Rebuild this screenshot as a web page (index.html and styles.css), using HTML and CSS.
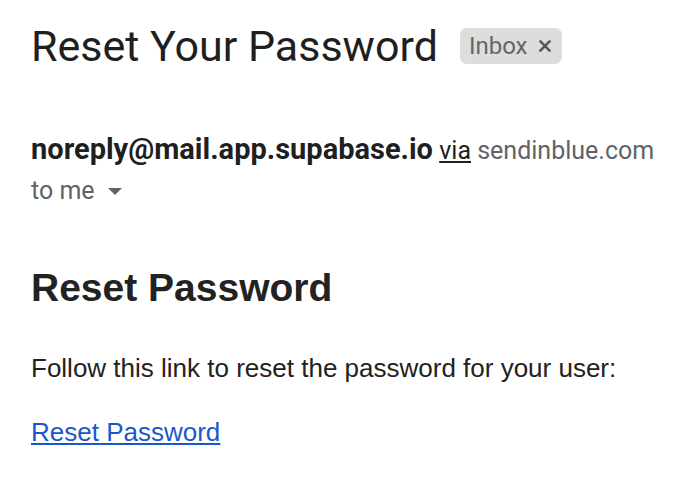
FILE: index.html
```html
<!DOCTYPE html>
<html>
<head>
<meta charset="utf-8">
<link rel="stylesheet" href="styles.css">
</head>
<body>
<div class="page">
  <div class="subject">
    <h1 class="title">Reset Your Password</h1>
    <span class="chip">Inbox <span class="chip-x">×</span></span>
  </div>
  <div class="sender">
    <div class="from"><span class="addr">noreply@mail.app.supabase.io</span> <span class="via">via</span> <span class="domain">sendinblue.com</span></div>
    <div class="to">to me <span class="caret"></span></div>
  </div>
  <div class="message">
    <h2 class="msg-title">Reset Password</h2>
    <p class="msg-text">Follow this link to reset the password for your user:</p>
    <p class="msg-link"><a href="#">Reset Password</a></p>
  </div>
</div>
</body>
</html>
```
FILE: styles.css
```css
html, body { margin: 0; padding: 0; background: #fff; }
.page { padding: 22px 31px; }
.subject { display: flex; align-items: center; gap: 22px; height: 48px; }
.title { margin: 0; font-family: Roboto, "Noto Sans", sans-serif; font-weight: 400; font-size: 43px; color: #1f1f1f; letter-spacing: 0; }
.chip { display: inline-flex; align-items: center; gap: 10px; background: #dddddd; color: #666; font-family: Roboto, sans-serif; font-size: 24px; height: 36px; padding: 0 10px 0 9px; border-radius: 7px; }
.chip-x { font-size: 28px; color: #555; line-height: 1; }
.sender { margin-top: 60px; font-family: Roboto, sans-serif; font-size: 25px; }
.from { line-height: 38px; color: #5f6368; }
.addr { font-weight: 700; font-size: 29px; color: #1f1f1f; }
.via { text-decoration: underline; color: #1f1f1f; }
.to { margin-top: 2px; line-height: 38px; color: #5f6368; display: flex; align-items: center; gap: 13px; }
.caret { width: 0; height: 0; border-left: 7px solid transparent; border-right: 7px solid transparent; border-top: 7px solid #5f6368; }
.message { margin-top: 55px; font-family: "Liberation Sans", Arial, sans-serif; color: #222; }
.msg-title { margin: 0; font-size: 39px; font-weight: 700; line-height: 46px; }
.msg-text { margin: 41px 0 0; font-size: 26px; line-height: 32px; }
.msg-link { margin: 32px 0 0; font-size: 26px; line-height: 32px; }
.msg-link a { color: #1a56cc; }
```
